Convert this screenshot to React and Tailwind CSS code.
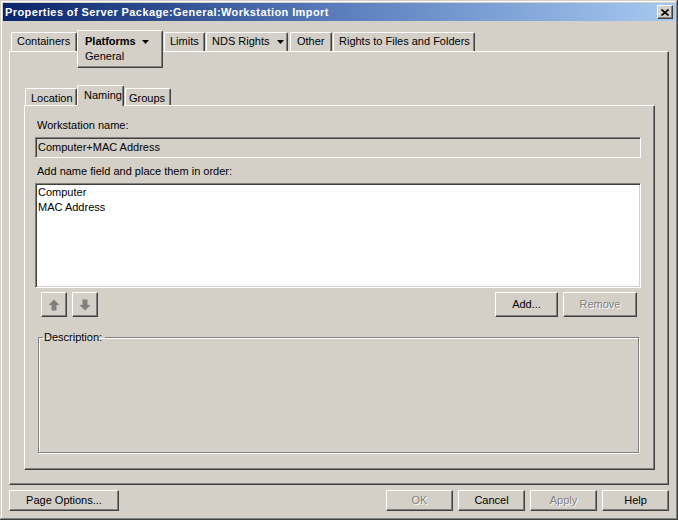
import React from 'react';

function Btn({ children, disabled, className = '' }) {
  return (
    <div
      className={`flex items-center justify-center bg-[#d4d0c8] border border-white border-r-[#404040] border-b-[#404040] shadow-[inset_-1px_-1px_0_#808080] ${
        disabled ? 'text-[#808080] [text-shadow:1px_1px_0_#fff]' : 'text-black'
      } ${className}`}
    >
      {children}
    </div>
  );
}

function Caret() {
  return (
    <svg width="7" height="4" viewBox="0 0 7 4" className="shrink-0">
      <path d="M0 0h7L3.5 4z" fill="#000" />
    </svg>
  );
}

function Tab({ className = '', children }) {
  return (
    <div
      className={`flex items-start bg-[#d4d0c8] border-t border-l border-white border-r border-r-[#404040] rounded-t-[2px] shadow-[inset_-1px_0_0_#808080] ${className}`}
    >
      {children}
    </div>
  );
}

function ArrowIcon({ down }) {
  return (
    <svg width="12" height="12" viewBox="0 0 12 12" className={down ? 'rotate-180' : ''}>
      <path d="M6 0.5L11.5 6H8.5V11.5H3.5V6H0.5Z" fill="#808080" />
    </svg>
  );
}

export default function App() {
  return (
    <div className="w-[678px] h-[520px] bg-[#d4d0c8] p-[3px] flex flex-col font-['Liberation_Sans',Arial,sans-serif] text-[11px] leading-[15px] text-black shadow-[inset_-1px_-1px_0_#404040,inset_1px_1px_0_#d4d0c8,inset_-2px_-2px_0_#808080,inset_2px_2px_0_#fff]">
      {/* title bar */}
      <div className="h-[18px] flex items-center justify-between pl-[2px] pr-[2px] bg-linear-to-r from-[#0a246a] via-[#5b7dbd] to-[#a6caf0]">
        <span className="text-white font-bold text-[11px] leading-[13px] tracking-[0.4px]">
          Properties of Server Package:General:Workstation Import
        </span>
        <div className="w-[16px] h-[14px] flex items-center justify-center bg-[#d4d0c8] border border-white border-r-[#404040] border-b-[#404040] shadow-[inset_-1px_-1px_0_#808080]">
          <svg width="8" height="7" viewBox="0 0 8 7">
            <path d="M0.5 0.5L7.5 6.5M7.5 0.5L0.5 6.5" stroke="#000" strokeWidth="1.6" />
          </svg>
        </div>
      </div>

      <div className="flex-1 flex flex-col px-[6px]">
        {/* top tabs */}
        <div className="relative z-10 mt-[9px] h-[21px] flex items-start pl-[2px]">
          <Tab className="w-[66px] h-[19px] mt-[2px] pl-[5px] pt-[1px]">Containers</Tab>
          <div className="w-[86px] h-[38px] flex flex-col bg-[#d4d0c8] border border-white border-r-[#404040] border-b-[#404040] rounded-t-[2px] shadow-[inset_-1px_-1px_0_#808080] pl-[7px] pt-[3px]">
            <div className="flex items-center gap-[6px] h-[15px]">
              <span className="font-bold">Platforms</span>
              <Caret />
            </div>
            <span className="leading-[15px]">General</span>
          </div>
          <Tab className="ml-[1px] w-[41px] h-[19px] mt-[2px] pl-[5px] pt-[1px]">Limits</Tab>
          <Tab className="ml-[1px] w-[82px] h-[19px] mt-[2px] pl-[5px] pt-[1px]">
            <div className="flex items-center gap-[8px] h-[15px]">
              <span>NDS Rights</span>
              <Caret />
            </div>
          </Tab>
          <Tab className="ml-[2px] w-[42px] h-[19px] mt-[2px] pl-[6px] pt-[1px]">Other</Tab>
          <Tab className="ml-[1px] w-[142px] h-[19px] mt-[2px] pl-[5px] pt-[1px]">Rights to Files and Folders</Tab>
        </div>

        {/* outer panel */}
        <div className="h-[434px] flex flex-col border border-white border-r-[#404040] border-b-[#404040] shadow-[inset_-1px_-1px_0_#808080] pl-[14px] pr-[13px]">
          {/* inner tabs */}
          <div className="relative z-10 mt-[33px] h-[20px] flex items-start">
            <Tab className="ml-[1px] w-[52px] h-[17px] mt-[3px] pl-[5px] pt-[3px] leading-[13px]">Location</Tab>
            <Tab className="w-[47px] h-[21px] pl-[6px] pt-[3px] leading-[13px]">Naming</Tab>
            <Tab className="ml-[1px] w-[46px] h-[17px] mt-[3px] pl-[3px] pt-[3px] leading-[13px]">Groups</Tab>
          </div>

          {/* inner panel */}
          <div className="h-[365px] flex flex-col border border-white border-r-[#404040] border-b-[#404040] shadow-[inset_-1px_-1px_0_#808080] pl-[10px] pr-[13px]">
            <div className="mt-[13px] h-[13px] leading-[13px] pl-[2px]">Workstation name:</div>
            <div className="mt-[5px] h-[21px] flex items-center pl-[2px] border border-[#808080] border-r-white border-b-white shadow-[inset_1px_1px_0_#404040,inset_-1px_-1px_0_#d4d0c8]">
              Computer+MAC Address
            </div>
            <div className="mt-[7px] h-[13px] leading-[13px] pl-[2px]">Add name field and place them in order:</div>
            <div className="mt-[5px] h-[105px] bg-white pl-[2px] pt-[1px] border border-[#808080] border-r-white border-b-white shadow-[inset_1px_1px_0_#404040,inset_-1px_-1px_0_#d4d0c8] leading-[15px]">
              <div>Computer</div>
              <div>MAC Address</div>
            </div>

            <div className="mt-[4px] h-[25px] flex items-center pl-[6px] pr-[4px]">
              <Btn className="w-[26px] h-[25px]">
                <ArrowIcon />
              </Btn>
              <Btn className="ml-[5px] w-[26px] h-[25px]">
                <ArrowIcon down />
              </Btn>
              <div className="flex-1" />
              <Btn className="w-[63px] h-[25px]">Add...</Btn>
              <Btn disabled className="ml-[5px] w-[74px] h-[25px]">Remove</Btn>
            </div>

            <fieldset className="mt-[14px] ml-[3px] mr-[2px] h-[122px] border border-[#808080] shadow-[inset_1px_1px_0_#fff,1px_1px_0_#fff] px-[4px]">
              <legend className="px-[1px] pr-[3px] leading-[13px]">Description:</legend>
            </fieldset>
          </div>
        </div>

        {/* bottom buttons */}
        <div className="mt-[5px] h-[21px] flex items-center">
          <Btn className="w-[110px] h-[21px]">Page Options...</Btn>
          <div className="flex-1" />
          <div className="flex gap-[5px]">
            <Btn disabled className="w-[67px] h-[21px]">OK</Btn>
            <Btn className="w-[67px] h-[21px]">Cancel</Btn>
            <Btn disabled className="w-[67px] h-[21px]">Apply</Btn>
            <Btn className="w-[67px] h-[21px]">Help</Btn>
          </div>
        </div>
      </div>
    </div>
  );
}
